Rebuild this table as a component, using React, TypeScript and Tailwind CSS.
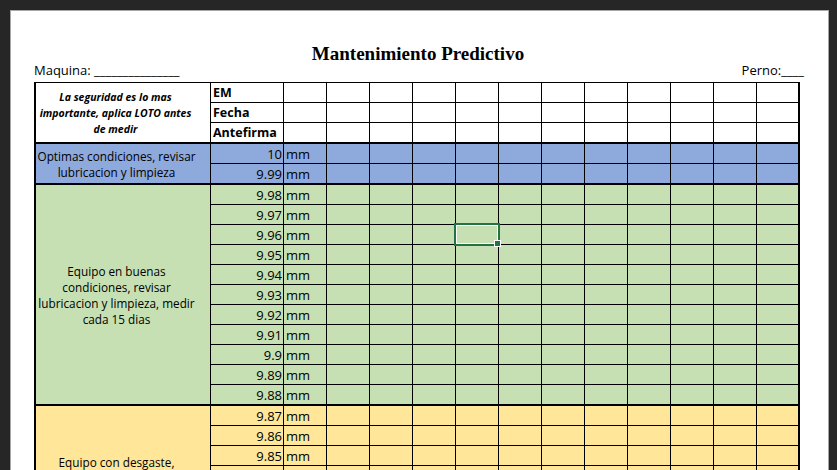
import React from "react";

const greenVals = ["9.98", "9.97", "9.96", "9.95", "9.94", "9.93", "9.92", "9.91", "9.9", "9.89", "9.88"];
const yellowVals = ["9.87", "9.86", "9.85", "9.84", "9.83", "9.82", "9.81", "9.8"];
const blueVals = ["10", "9.99"];

function DataCells({ count, selectIndex }: { count: number; selectIndex?: number }) {
  return (
    <>
      {Array.from({ length: count }).map((_, i) => (
        <div
          key={i}
          className={
            i === count - 1
              ? "relative w-[43px] shrink-0 border-r-2 border-black"
              : "relative w-[43px] shrink-0 border-r border-black"
          }
        >
          {selectIndex === i && (
            <>
              <div className="absolute left-[-2px] top-[-2px] z-10 h-[23px] w-[46px] border-2 border-[#217346] shadow-[inset_0_0_0_1px_#ffffff]" />
              <div className="absolute left-[38px] top-[15px] z-20 h-[7px] w-[7px] border border-white bg-[#217346]" />
            </>
          )}
        </div>
      ))}
    </>
  );
}

function ValueRow({ value, last, selectIndex }: { value: string; last: boolean; selectIndex?: number }) {
  return (
    <div className={last ? "flex h-[19px]" : "flex h-[20px] border-b border-black"}>
      <div className="w-[73px] shrink-0 border-r border-black pr-[1px] text-right text-[13px] leading-[20px]">
        {value}
      </div>
      <div className="w-[43px] shrink-0 border-r border-black pl-[2px] text-[13px] leading-[20px]">mm</div>
      <DataCells count={11} selectIndex={selectIndex} />
    </div>
  );
}

function Section({
  bg,
  label,
  values,
  selectRow,
  selectIndex,
}: {
  bg: string;
  label: React.ReactNode;
  values: string[];
  selectRow?: number;
  selectIndex?: number;
}) {
  return (
    <div className={`flex border-b-2 border-black ${bg}`}>
      <div className="flex w-[175px] shrink-0 items-center justify-center border-r border-black pr-[13px] text-center text-[11.75px] leading-[16px]">
        <div className="whitespace-nowrap">{label}</div>
      </div>
      <div className="flex flex-col">
        {values.map((v, i) => (
          <ValueRow
            key={v}
            value={v}
            last={i === values.length - 1}
            selectIndex={selectRow === i ? selectIndex : undefined}
          />
        ))}
      </div>
    </div>
  );
}

export default function App() {
  const headerRows = ["EM", "Fecha", "Antefirma"];
  return (
    <div className="h-[470px] w-[837px] overflow-hidden bg-[#262626] pl-[10px] pt-[10px] font-['Open_Sans',sans-serif] text-black">
      <div className="h-[600px] w-[819px] border-l border-r border-t border-[#a6a6a6] bg-white pl-[23px] pt-[33px]">
        <div className="h-[19px] w-[768px] text-center font-['Liberation_Serif',serif] text-[19px] font-bold leading-[19px]">
          Mantenimiento Predictivo
        </div>
        <div className="flex h-[19px] w-[770px] justify-between text-[13px] leading-[14px]">
          <span>Maquina: _______________</span>
          <span>Perno:____</span>
        </div>
        <div className="w-[766px] border-l-2 border-t border-black">
          <div className="flex border-b-2 border-black">
            <div className="flex w-[175px] shrink-0 items-center justify-center border-r border-black pr-[15px] text-center text-[10.5px] font-bold italic leading-[16px]">
              <div className="whitespace-nowrap">
                La seguridad es lo mas
                <br />
                importante, aplica LOTO antes
                <br />
                de medir
              </div>
            </div>
            <div className="flex flex-col">
              {headerRows.map((h, i) => (
                <div key={h} className={i === 2 ? "flex h-[19px]" : "flex h-[20px] border-b border-black"}>
                  <div className="w-[73px] shrink-0 border-r border-black pl-[2px] text-[12.5px] font-bold leading-[20px]">
                    {h}
                  </div>
                  <DataCells count={12} />
                </div>
              ))}
            </div>
          </div>
          <Section
            bg="bg-[#8ea9db]"
            values={blueVals}
            label={
              <>
                Optimas condiciones, revisar
                <br />
                lubricacion y limpieza
              </>
            }
          />
          <Section
            bg="bg-[#c6e0b4]"
            values={greenVals}
            selectRow={2}
            selectIndex={3}
            label={
              <>
                Equipo en buenas
                <br />
                condiciones, revisar
                <br />
                lubricacion y limpieza, medir
                <br />
                cada 15 dias
              </>
            }
          />
          <Section
            bg="bg-[#ffe699]"
            values={yellowVals}
            label={
              <>
                Equipo con desgaste,
                <br />
                revisar lubricacion y
                <br />
                limpieza, medir cada 7
                <br />
                dias
              </>
            }
          />
        </div>
      </div>
    </div>
  );
}
